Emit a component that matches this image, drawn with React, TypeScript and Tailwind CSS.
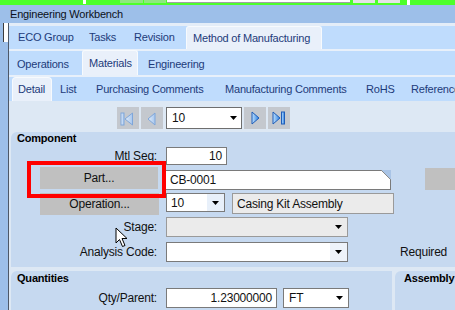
import React from "react";

const Down = () => (
  <svg width="7" height="4" viewBox="0 0 7 4">
    <path d="M0 0H7L3.5 4Z" fill="#000" />
  </svg>
);

const NavBtn = ({ kind }: { kind: "first" | "prev" | "next" | "last" }) => {
  const dis = kind === "first" || kind === "prev";
  const stroke = dis ? "#7ea6da" : "#1f5db8";
  const fill = dis ? "url(#gd)" : "url(#ge)";
  return (
    <div className="w-[22px] h-[22px] bg-[#c4c8ce] flex items-center justify-center">
      <svg width="22" height="22" viewBox="0 0 22 22">
        <defs>
          <linearGradient id="gd" x1="0" y1="0" x2="1" y2="0">
            <stop offset="0" stopColor="#e4eefa" />
            <stop offset="1" stopColor="#a6c6ee" />
          </linearGradient>
          <linearGradient id="ge" x1="0" y1="0" x2="1" y2="0">
            <stop offset="0" stopColor="#bfe2ff" />
            <stop offset="1" stopColor="#2c7fe0" />
          </linearGradient>
        </defs>
        {kind === "first" && (
          <>
            <rect x="4" y="6" width="3" height="12" fill={fill} stroke={stroke} strokeWidth="1" />
            <path d="M15.5 6 L8 12 L15.5 18 Z" fill={fill} stroke={stroke} strokeWidth="1" />
          </>
        )}
        {kind === "prev" && (
          <path d="M14 6 L7 12 L14 18 Z" fill={fill} stroke={stroke} strokeWidth="1" />
        )}
        {kind === "next" && (
          <path d="M8 5 L15 11 L8 17 Z" fill={fill} stroke={stroke} strokeWidth="1" />
        )}
        {kind === "last" && (
          <>
            <path d="M5 5 L12 11 L5 17 Z" fill={fill} stroke={stroke} strokeWidth="1" />
            <rect x="13.5" y="5" width="3" height="12" fill={fill} stroke={stroke} strokeWidth="1" />
          </>
        )}
      </svg>
    </div>
  );
};

export default function App() {
  return (
    <div className="relative w-[455px] h-[310px] overflow-hidden bg-[#dde8f4] flex flex-col font-['Liberation_Sans',Arial,sans-serif] text-[11px] tracking-[-0.2px] text-[#111] leading-none">
      {/* top bar */}
      <div className="h-[5px] shrink-0 bg-[#4dff2b] flex items-start">
        <div className="w-[83px]" />
        <div className="w-[3px] h-[4px] bg-white" />
        <div className="w-[34px]" />
        <div className="w-[23px] h-[3px] bg-[#8fe87f]" />
        <div className="w-[1px]" />
        <div className="w-[22px] h-[3px] bg-[#8fe87f]" />
        <div className="w-[1px]" />
        <div className="w-[183px] h-[3px] bg-white border-b border-[#a0a0a0]" />
        <div className="w-[3px]" />
        <div className="w-[22px] h-[3px] bg-[#e4e4e4]" />
        <div className="w-[3px]" />
        <div className="w-[22px] h-[3px] bg-[#e4e4e4]" />
        <div className="w-[7px]" />
        <div className="w-[3px] h-[5px] bg-white" />
      </div>
      {/* header */}
      <div className="h-[18px] shrink-0 bg-[#9dbfe9] pl-[10px] flex items-center text-[#0c1020] text-[11px]">
        Engineering Workbench
      </div>
      <div className="flex flex-1 min-h-0">
        {/* left strip */}
        <div className="w-[9px] shrink-0 bg-[#9dbfe9] border-r border-[#4e5868] flex flex-col">
          <div className="h-[19px] ml-[3px] bg-white border-l border-[#3c3c3c]" />
        </div>
        {/* main */}
        <div className="flex-1 min-w-0 flex flex-col">
          <div className="h-[3px] shrink-0 bg-[#e4edf8]" />
          {/* row 1 */}
          <div className="h-[23px] shrink-0 bg-[#bfdcfd] flex items-stretch pl-[9px] text-[#1d3b7a] whitespace-nowrap">
            <div className="w-[71px] flex items-center">ECO Group</div>
            <div className="w-[45px] flex items-center">Tasks</div>
            <div className="w-[52px] flex items-center">Revision</div>
            <div className="w-[136px] pl-[6px] flex items-center bg-[#e9f0fa] border border-b-0 border-[#f7fafd] rounded-t-[3px]">
              Method of Manufacturing
            </div>
          </div>
          <div className="h-[2px] shrink-0 bg-[#e8f0fa]" />
          {/* row 2 */}
          <div className="h-[24px] shrink-0 bg-[#bfdcfd] flex items-stretch pl-[8px] text-[#1d3b7a] whitespace-nowrap">
            <div className="w-[65px] flex items-center pt-[2px]">Operations</div>
            <div className="w-[56px] pl-[6px] flex items-center bg-[#e9f0fa] border border-b-0 border-[#f7fafd] rounded-t-[3px] -mt-[1px]">
              Materials
            </div>
            <div className="w-[10px]" />
            <div className="flex items-center pt-[2px]">Engineering</div>
          </div>
          <div className="h-[2px] shrink-0 bg-[#e8f0fa]" />
          {/* row 3 */}
          <div className="h-[24px] shrink-0 bg-[#bfdcfd] flex items-stretch pl-[3px] text-[#1d3b7a] whitespace-nowrap overflow-hidden">
            <div className="w-[40px] shrink-0 pl-[5px] flex items-center bg-[#e9f0fa] border border-b-0 border-[#f7fafd] rounded-t-[4px]">
              Detail
            </div>
            <div className="w-[44px] shrink-0 pl-[8px] flex items-center">List</div>
            <div className="w-[129px] shrink-0 flex items-center">Purchasing Comments</div>
            <div className="w-[141px] shrink-0 flex items-center">Manufacturing Comments</div>
            <div className="w-[45px] shrink-0 flex items-center">RoHS</div>
            <div className="shrink-0 flex items-center">Reference</div>
          </div>
          {/* toolbar */}
          <div className="h-[31px] shrink-0 flex items-start pt-[6px] pl-[108px]">
            <NavBtn kind="first" />
            <div className="w-[2px]" />
            <NavBtn kind="prev" />
            <div className="w-[3px]" />
            <div className="w-[76px] h-[22px] bg-white border border-[#6e6e6e] flex items-center">
              <span className="flex-1 pl-[5px] text-[12px]">10</span>
              <span className="w-[16px] flex justify-center">
                <Down />
              </span>
            </div>
            <div className="w-[2px]" />
            <NavBtn kind="next" />
            <div className="w-[2px]" />
            <NavBtn kind="last" />
          </div>
          {/* component group */}
          <div className="h-[135px] shrink-0 ml-[2px] bg-[#c6d9f0] rounded-tl-[6px] flex flex-col">
            <div className="h-[13px] pl-[6px] flex items-center font-bold text-black">Component</div>
            {/* Mtl seq */}
            <div className="mt-[2px] h-[18px] flex items-center">
              <div className="w-[146px] text-right text-[12px]">Mtl Seq:</div>
              <div className="ml-[9px] w-[61px] h-[18px] bg-white border border-[#7a7a7a] flex items-center justify-end pr-[4px] text-[12px]">
                10
              </div>
            </div>
            {/* Part */}
            <div className="mt-[2px] h-[23px] flex items-start">
              <div className="ml-[29px] w-[119px] h-[22px] bg-[#c0c0c0] flex items-center justify-center text-[12px]">
                Part...
              </div>
              <div className="relative ml-[7px] mt-[3px] w-[228px] h-[20px] bg-white border border-[#7a7a7a] flex items-center pl-[4px] text-[12px]">
                CB-0001
                <svg className="absolute -top-[1px] -right-[1px]" width="10" height="10" viewBox="0 0 10 10">
                  <path d="M0 0H10V10Z" fill="#a9c4e6" />
                  <path d="M0 0L10 10" stroke="#8a8a8a" strokeWidth="1" />
                </svg>
              </div>
              <div className="ml-[34px] mt-[1px] w-[30px] h-[22px] bg-[#c0c0c0]" />
            </div>
            {/* Operation */}
            <div className="mt-[3px] h-[22px] flex items-start">
              <div className="ml-[29px] w-[119px] h-[22px] bg-[#c0c0c0] flex items-center justify-center text-[12px]">
                Operation...
              </div>
              <div className="ml-[7px] w-[59px] h-[19px] bg-white border border-[#7a7a7a] flex items-center text-[12px]">
                <span className="flex-1 pl-[4px]">10</span>
                <span className="w-[17px] h-full bg-[#e8f0fa] flex items-center justify-center">
                  <Down />
                </span>
              </div>
              <div className="ml-[7px] w-[162px] h-[21px] bg-[#ebebeb] border border-[#9a9a9a] flex items-center pl-[4px] text-[12px]">
                Casing Kit Assembly
              </div>
            </div>
            {/* Stage */}
            <div className="mt-[2px] h-[20px] flex items-center">
              <div className="w-[146px] text-right text-[12px]">Stage:</div>
              <div className="ml-[9px] w-[182px] h-[20px] bg-[#ebebeb] border border-[#9a9a9a] flex items-center justify-end">
                <span className="w-[17px] flex justify-center">
                  <Down />
                </span>
              </div>
            </div>
            {/* Analysis */}
            <div className="mt-[5px] h-[20px] flex items-center">
              <div className="w-[146px] text-right text-[12px]">Analysis Code:</div>
              <div className="ml-[9px] w-[182px] h-[20px] bg-white border border-[#7a7a7a] flex items-center justify-end">
                <span className="w-[17px] h-full bg-[#eef3fa] flex items-center justify-center">
                  <Down />
                </span>
              </div>
              <div className="ml-[52px] text-[12px] whitespace-nowrap">Required</div>
            </div>
          </div>
          {/* bottom groups */}
          <div className="mt-[4px] flex flex-1">
            <div className="ml-[2px] w-[381px] bg-[#c6d9f0] rounded-tl-[6px] flex flex-col">
              <div className="h-[14px] pl-[6px] flex items-center font-bold text-black">Quantities</div>
              <div className="mt-[3px] h-[20px] flex items-center">
                <div className="w-[146px] text-right text-[12px]">Qty/Parent:</div>
                <div className="ml-[9px] w-[111px] h-[20px] bg-white border border-[#7a7a7a] flex items-center justify-end pr-[4px] text-[12px]">
                  1.23000000
                </div>
                <div className="ml-[6px] w-[66px] h-[20px] bg-white border border-[#7a7a7a] flex items-center text-[12px]">
                  <span className="flex-1 pl-[5px]">FT</span>
                  <span className="w-[17px] flex justify-center">
                    <Down />
                  </span>
                </div>
              </div>
            </div>
            <div className="ml-[3px] flex-1 bg-[#c6d9f0] rounded-tl-[6px] overflow-hidden">
              <div className="h-[14px] pl-[9px] flex items-center font-bold text-black whitespace-nowrap">Assembly</div>
            </div>
          </div>
        </div>
      </div>
      {/* red annotation */}
      <div className="absolute left-[27px] top-[161px] w-[139px] h-[37px] border-[4px] border-[#ff0000]" />
      {/* cursor */}
      <svg className="absolute left-[115px] top-[227px]" width="14" height="21" viewBox="0 0 14 21">
        <path d="M1 1 L1 16 L4.5 12.5 L7.5 19.5 L10 18.5 L7 11.5 L12 11.5 Z" fill="#fff" stroke="#000" strokeWidth="1" />
      </svg>
    </div>
  );
}
